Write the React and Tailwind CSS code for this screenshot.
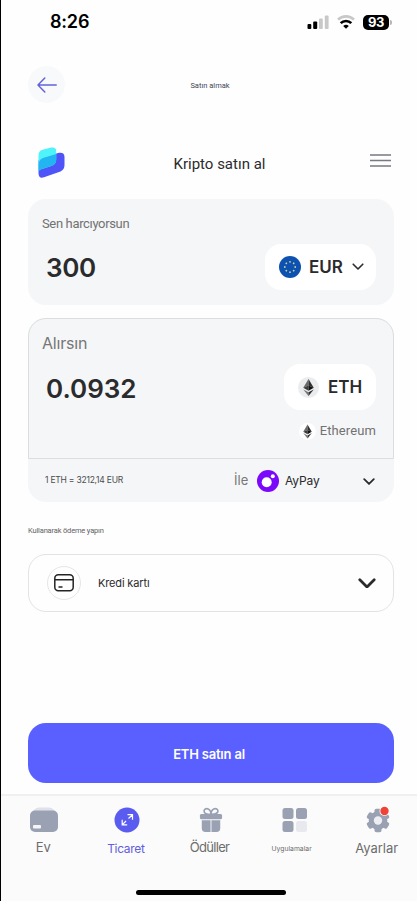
const StatusBar = () => (
    <div className="flex h-11 shrink-0 items-center justify-between pl-[49px] pr-[25px]">
        <span className="text-[18px] font-semibold leading-none text-black tracking-[-0.2px]">8:26</span>
        <div className="flex items-center gap-[8px]">
            <svg width="22" height="14" viewBox="0 0 22 14">
                <rect x="0.5" y="9" width="3.8" height="5" rx="1" fill="#000" />
                <rect x="6.2" y="6.5" width="4" height="7.5" rx="1" fill="#000" />
                <rect x="12" y="3.5" width="3.8" height="10.5" rx="1" fill="#c8c8c8" />
                <rect x="17.8" y="0.5" width="3.8" height="13.5" rx="1" fill="#c8c8c8" />
            </svg>
            <svg width="18" height="14" viewBox="0 0 18 14" fill="none" strokeWidth="2.6">
                <path d="M1 4.600a11.500 11.500 0 0 1 16 0" stroke="#c8c8c8" />
                <path d="M3.700 8.200a7.400 7.400 0 0 1 10.600 0" stroke="#000" />
                <path d="M6.200 11a4.200 4.200 0 0 1 5.600 0L9 13.800z" fill="#000" />
            </svg>
            <div className="flex items-center">
                <span className="flex h-[15px] w-[26px] items-center justify-center rounded-[5px] bg-black text-[13px] font-bold leading-none tracking-[-0.3px] text-white">93</span>
                <span className="ml-px h-[5px] w-[2px] rounded-r-full bg-[#b5b5b5]" />
            </div>
        </div>
    </div>
);

const Logo = () => (
    <svg width="27" height="31" viewBox="0 0 27 31">
        <defs>
            <clipPath id="back">
                <path d="M0.500 14Q0.500 11.500 3.500 10.700L21 5.800Q26.500 5 26.500 10V18Q26.500 22.500 22.500 24.500L6 30.300Q0.500 32 0.500 26Z" />
            </clipPath>
        </defs>
        <path d="M0.500 14Q0.500 11.500 3.500 10.700L21 5.800Q26.500 5 26.500 10V18Q26.500 22.500 22.500 24.500L6 30.300Q0.500 32 0.500 26Z" fill="#4f54f8" />
        <path d="M0.500 8Q0.500 4 4.500 2.800L13 0.600Q18.200 -0.400 18.200 4V12.500Q18.200 17 14 18.700L4 22Q0.500 23 0.500 25Z" fill="#4ff3fa" />
        <path clipPath="url(#back)" d="M0.500 17Q1 12.500 5 11L18.200 7V12.500Q18.200 17 14 18.700L4 22Q0.500 23 0.500 25Z" fill="#22b5f2" />
    </svg>
);

const Chevron = ({ width, stroke = 2 }) => (
    <svg width={width} height={width * 0.6} viewBox="0 0 15 9" fill="none" stroke="#2b2b2d" strokeWidth={stroke} strokeLinecap="round" strokeLinejoin="round">
        <path d="M1.500 1.500l6 6 6-6" />
    </svg>
);

const EuFlag = () => (
    <svg width="22" height="22" viewBox="0 0 22 22">
        <circle cx="11" cy="11" r="11" fill="#0d52b0" />
        {[0, 45, 90, 135, 180, 225, 270, 315].map(a => (
            <circle key={a} cx="11" cy="5.800" r="0.900" fill="#c8d39a" transform={`rotate(${a} 11 11)`} />
        ))}
    </svg>
);

const EthIcon = ({ size, bg }) => (
    <svg width={size} height={size} viewBox="0 0 22 22">
        <circle cx="11" cy="11" r="11" fill={bg} />
        <path d="M11 2L5.500 11.300 11 9z" fill="#696969" />
        <path d="M11 2l5.500 9.300L11 9z" fill="#303030" />
        <path d="M5.500 11.300L11 9v5.500z" fill="#3c3c3c" />
        <path d="M16.500 11.300L11 9v5.500z" fill="#111" />
        <path d="M5.500 13L11 16.100V20z" fill="#777" />
        <path d="M16.500 13L11 16.100V20z" fill="#303030" />
    </svg>
);

const navItems = [
    {
        label: 'Ev',
        className: 'pl-[2px] pr-[3px] pt-[2px] text-[13px] text-[#6d6d6d]',
        icon: (
            <svg width="30" height="26" viewBox="0 0 30 26">
                <path d="M3 7Q5 0.500 10 0.500h10Q25 0.500 27 7z" fill="#dfe2e8" />
                <rect x="1" y="3.500" width="28" height="21.500" rx="5" fill="#99a1b3" />
                <rect x="4" y="18" width="8" height="3.500" rx="1" fill="#f4f5f8" />
            </svg>
        ),
    },
    {
        label: 'Ticaret',
        className: 'pr-[3px] pt-[4px] text-[12px] tracking-[-0.3px] text-[#625de0]',
        icon: (
            <svg width="26" height="26" viewBox="0 0 26 26" fill="none" stroke="#fff" strokeWidth="1.200">
                <circle cx="13" cy="13" r="12.500" fill="#5a5cf0" stroke="none" />
                <path d="M14.500 11.500L18.500 7.700M13.500 7.700h5v5M12 14L8.200 17.800M8.200 12.800v5h5" />
            </svg>
        ),
    },
    {
        label: 'Ödüller',
        className: 'pr-[3px] pt-[2px] text-[13px] tracking-[-0.7px] text-[#6d6d6d]',
        icon: (
            <svg width="24" height="26" viewBox="0 0 26 26" preserveAspectRatio="none" fill="none">
                <path d="M13 7.500C7 7.500 5.500 5.500 5.500 4s2-3 4.500-2 3 3.500 3 5.500c0-2 .5-4.500 3-5.500s4.500.5 4.500 2-1.500 3.500-7.500 3.500z" stroke="#99a1b3" strokeWidth="1.800" />
                <rect x="1" y="7" width="24" height="5.300" rx="1.500" fill="#99a1b3" />
                <path d="M3 13.200h20V21q0 4-4 4H7q-4 0-4-4z" fill="#99a1b3" />
                <path d="M13 13v12" stroke="#e9ebf0" strokeWidth="1.200" />
            </svg>
        ),
    },
    {
        label: 'Uygulamalar',
        className: 'pr-[6px] pt-[5px] text-[6.800px] text-[#6d6d6d]',
        icon: (
            <svg width="26" height="26" viewBox="0 0 26 26" fill="#99a1b3">
                <rect x="0.500" y="1" width="11" height="11" rx="2.500" />
                <rect x="14" y="1" width="11" height="11" rx="2.500" />
                <rect x="0.500" y="14" width="11" height="11" rx="2.500" />
                <rect x="14" y="14" width="11" height="11" rx="2.500" fill="#e7e9ef" />
            </svg>
        ),
    },
    {
        label: 'Ayarlar',
        className: 'pr-[3px] pt-[5px] text-[13px] text-[#6d6d6d]',
        icon: (
            <svg width="26" height="28" viewBox="0 0 26 28">
                <g fill="#99a1b3">
                    <circle cx="13" cy="14.500" r="9.300" />
                    {[0, 60, 120, 180, 240, 300].map(a => (
                        <rect key={a} x="9.500" y="2.800" width="7" height="7" rx="1.800" transform={`rotate(${a} 13 14.500)`} />
                    ))}
                </g>
                <circle cx="13" cy="14.500" r="4.200" fill="#eceef2" />
                <circle cx="19.500" cy="5" r="5" fill="#fff" />
                <circle cx="19.500" cy="5" r="4.200" fill="#ee4438" />
            </svg>
        ),
    },
];

const App = () => (
    <div className="flex h-[901px] w-[417px] flex-col overflow-hidden border-l border-black bg-[#fefefe] font-['Inter',sans-serif] text-[#2b2b2d]">
        <StatusBar />

        <div className="mt-[22px] grid h-[37px] shrink-0 grid-cols-[37px_1fr_37px] items-center pl-[27px] pr-[25px]">
            <button className="flex size-[37px] items-center justify-center rounded-full bg-[#f8f9fb]">
                <svg width="20" height="16" viewBox="0 0 20 16" fill="none" stroke="#6263d8" strokeWidth="1.500" strokeLinecap="round" strokeLinejoin="round">
                    <path d="M19.200 8H1M7.800 1L1 8l6.800 7" />
                </svg>
            </button>
            <span className="pt-[3px] text-center font-['Roboto',sans-serif] text-[7.500px] text-[#3e4657]">Satın almak</span>
        </div>

        <header className="mt-[44px] grid h-[31px] shrink-0 grid-cols-[27px_1fr_21px] items-center pl-[37px] pr-[26px]">
            <Logo />
            <h1 className="pl-[4px] pt-[4px] text-center font-['Roboto',sans-serif] text-[15px]">Kripto satın al</h1>
            <svg className="-mt-[5px]" width="21" height="13" viewBox="0 0 21 13" stroke="#777a84" strokeWidth="1.400">
                <path d="M0 1h21M0 6.500h21M0 12h21" />
            </svg>
        </header>

        <main className="ml-[27px] mr-[23px] flex flex-col">
            <section className="mt-[21px] flex h-[106px] flex-col rounded-[18px] bg-[#f5f6f8] pl-[14px] pr-[18px] pt-[16px]">
                <span className="font-['Roboto',sans-serif] text-[13px] leading-[18px] tracking-[-0.35px] text-[#727272]">Sen harcıyorsun</span>
                <div className="mt-[11px] flex h-[46px] items-center justify-between pl-[4px]">
                    <span className="text-[26px] font-semibold tracking-[-0.3px]">300</span>
                    <button className="flex h-[46px] w-[111px] items-center rounded-[16px] bg-white pl-[14px]">
                        <EuFlag />
                        <span className="ml-[8px] mr-[9px] pt-[2px] text-[17px] font-semibold">EUR</span>
                        <Chevron width={12} />
                    </button>
                </div>
            </section>

            <section className="mt-[13px] flex h-[184px] flex-col rounded-[18px] bg-[#f5f6f8]">
                <div className="flex h-[141px] flex-col rounded-t-[18px] border border-[#dcdddf] pl-[13px] pr-[17px] pt-[13px]">
                    <span className="text-[16px] leading-[22px] tracking-[-0.2px] text-[#777]">Alırsın</span>
                    <div className="mt-[10px] flex h-[46px] items-center justify-between pl-[4px]">
                        <span className="pt-[3px] text-[26px] font-semibold">0.0932</span>
                        <button className="flex h-[46px] w-[92px] items-center rounded-[16px] bg-white pl-[14px]">
                            <EthIcon size={21} bg="#ebecee" />
                            <span className="ml-[9px] pt-px text-[17px] font-semibold">ETH</span>
                        </button>
                    </div>
                    <div className="mt-[11px] flex items-center justify-end gap-[4px] font-['Roboto',sans-serif] text-[13px] leading-[20px] tracking-[0.1px] text-[#727272]">
                        <EthIcon size={17} bg="#fff" />
                        <span>Ethereum</span>
                    </div>
                </div>
                <div className="flex h-[43px] items-center pl-[17px] pr-[19px]">
                    <span className="w-[189px] text-[8.500px] tracking-[-0.22px] text-[#4c4c4e]">1 ETH = 3212,14 EUR</span>
                    <span className="w-[23px] text-[13px] text-[#777]">İle</span>
                    <svg width="22" height="22" viewBox="0 0 22 22">
                        <circle cx="11" cy="11" r="11" fill="#7a08fa" />
                        <circle cx="9.700" cy="12.300" r="5" fill="#fff" />
                        <circle cx="15.800" cy="6.300" r="2" fill="#fff" />
                    </svg>
                    <span className="ml-[6px] flex-1 text-[12px] tracking-[-0.15px]">AyPay</span>
                    <span className="pt-[3px]">
                        <Chevron width={12} stroke={2.2} />
                    </span>
                </div>
            </section>

            <span className="mt-[24px] font-['Roboto',sans-serif] text-[7.500px] leading-[10px] tracking-[-0.17px] text-[#626262]">Kullanarak ödeme yapın</span>

            <button className="mt-[18px] flex h-[58px] items-center rounded-[18px] border-[1.500px] border-[#e4e2e5] pl-[18px] pr-[17px]">
                <span className="flex size-[34px] items-center justify-center rounded-full border border-[#e6e6e8]">
                    <svg width="20" height="18" viewBox="0 0 20 18" fill="none" stroke="#242424" strokeWidth="1.500">
                        <rect x="0.800" y="0.800" width="18.400" height="16" rx="3.500" />
                        <path d="M1 5.800h18M4.500 13h4" />
                    </svg>
                </span>
                <span className="ml-[17px] flex-1 pt-px text-left text-[11px] tracking-[-0.15px]">Kredi kartı</span>
                <Chevron width={18} stroke={2.3} />
            </button>

            <button className="mt-[111px] h-[60px] rounded-[18px] bg-[#5a60ff] pr-[4px] pt-[3px] text-[13px] font-semibold tracking-[-0.2px] text-white">ETH satın al</button>
        </main>

        <footer className="mt-[11px] flex flex-1 flex-col border-t-2 border-[#f0f0f1] bg-[#fbfbfb]">
            <nav className="-mr-[3px] mt-[10px] grid h-[56px] grid-cols-5 pl-px">
                {navItems.map(item => (
                    <div key={item.label} className="flex flex-col items-center">
                        <div className="flex h-[28px] items-center">{item.icon}</div>
                        <span className={`flex h-[25px] items-center ${item.className}`}>{item.label}</span>
                    </div>
                ))}
            </nav>
            <div className="ml-[135px] mt-[28px] h-[5px] w-[150px] rounded-full bg-black" />
        </footer>
    </div>
);

export default App;
